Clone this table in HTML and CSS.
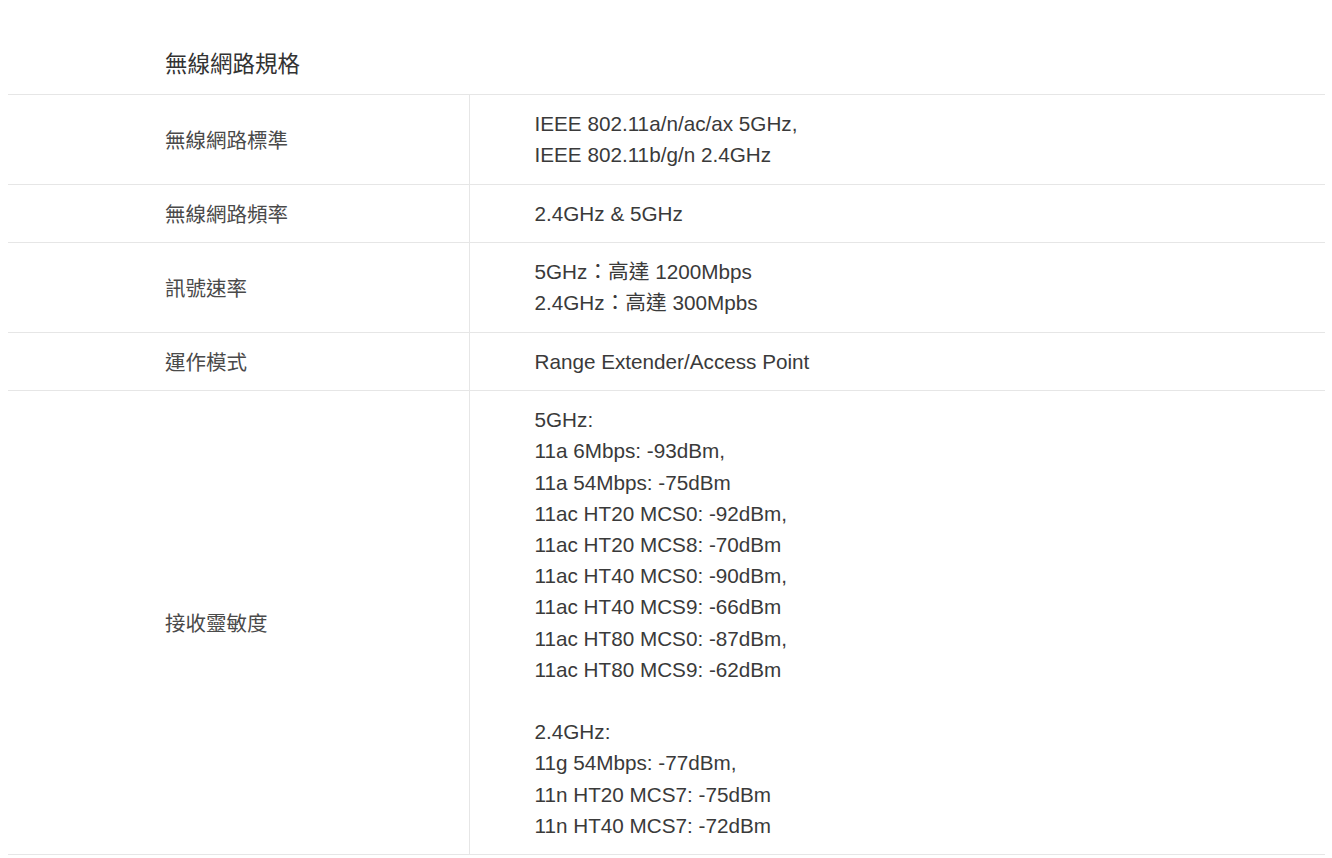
FILE: index.html
```html
<!DOCTYPE html>
<html lang="zh-Hant">
<head>
<meta charset="utf-8">
<link rel="stylesheet" href="styles.css">
</head>
<body>
<div class="spec">
  <h2 class="spec-title">無線網路規格</h2>
  <table class="spec-table">
    <tr>
      <th>無線網路標準</th>
      <td>IEEE 802.11a/n/ac/ax 5GHz,<br>IEEE 802.11b/g/n 2.4GHz</td>
    </tr>
    <tr>
      <th>無線網路頻率</th>
      <td>2.4GHz &amp; 5GHz</td>
    </tr>
    <tr>
      <th>訊號速率</th>
      <td>5GHz<span class="cjk">：高達</span> 1200Mbps<br>2.4GHz<span class="cjk">：高達</span> 300Mpbs</td>
    </tr>
    <tr>
      <th>運作模式</th>
      <td>Range Extender/Access Point</td>
    </tr>
    <tr>
      <th>接收靈敏度</th>
      <td>5GHz:<br>11a 6Mbps: -93dBm,<br>11a 54Mbps: -75dBm<br>11ac HT20 MCS0: -92dBm,<br>11ac HT20 MCS8: -70dBm<br>11ac HT40 MCS0: -90dBm,<br>11ac HT40 MCS9: -66dBm<br>11ac HT80 MCS0: -87dBm,<br>11ac HT80 MCS9: -62dBm<br><br>2.4GHz:<br>11g 54Mbps: -77dBm,<br>11n HT20 MCS7: -75dBm<br>11n HT40 MCS7: -72dBm</td>
    </tr>
  </table>
</div>
</body>
</html>
```

FILE: styles.css
```css
html, body {
  margin: 0;
  padding: 0;
  background: #fff;
}
body {
  padding: 0 7px 0 8px;
  font-family: "Liberation Sans", Arial, "Noto Sans CJK TC", sans-serif;
  color: #3a3a3a;
}
.spec-title {
  margin: 0;
  padding: 47px 0 0 157px;
  height: 94px;
  box-sizing: border-box;
  font-family: "Noto Sans CJK TC", sans-serif;
  font-size: 22.5px;
  font-weight: normal;
  line-height: 30px;
  color: #333;
}
.spec-table {
  width: 100%;
  border-collapse: collapse;
  font-size: 20.7px;
  line-height: 31.2px;
}
.spec-table tr {
  border-top: 1px solid #e6e6e6;
  border-bottom: 1px solid #e6e6e6;
}
.spec-table th {
  width: 461px;
  box-sizing: border-box;
  padding: 13px 0 13px 157px;
  text-align: left;
  font-family: "Noto Sans CJK TC", sans-serif;
  font-size: 20.5px;
  font-weight: normal;
  line-height: 31px;
  color: #4a4a4a;
  border-right: 1px solid #e6e6e6;
  vertical-align: middle;
}
.spec-table td {
  padding: 13px 0 13.25px 65px;
  color: #3a3a3a;
  vertical-align: middle;
}
.cjk {
  font-family: "Noto Sans CJK TC", sans-serif;
  line-height: 1;
}
```
